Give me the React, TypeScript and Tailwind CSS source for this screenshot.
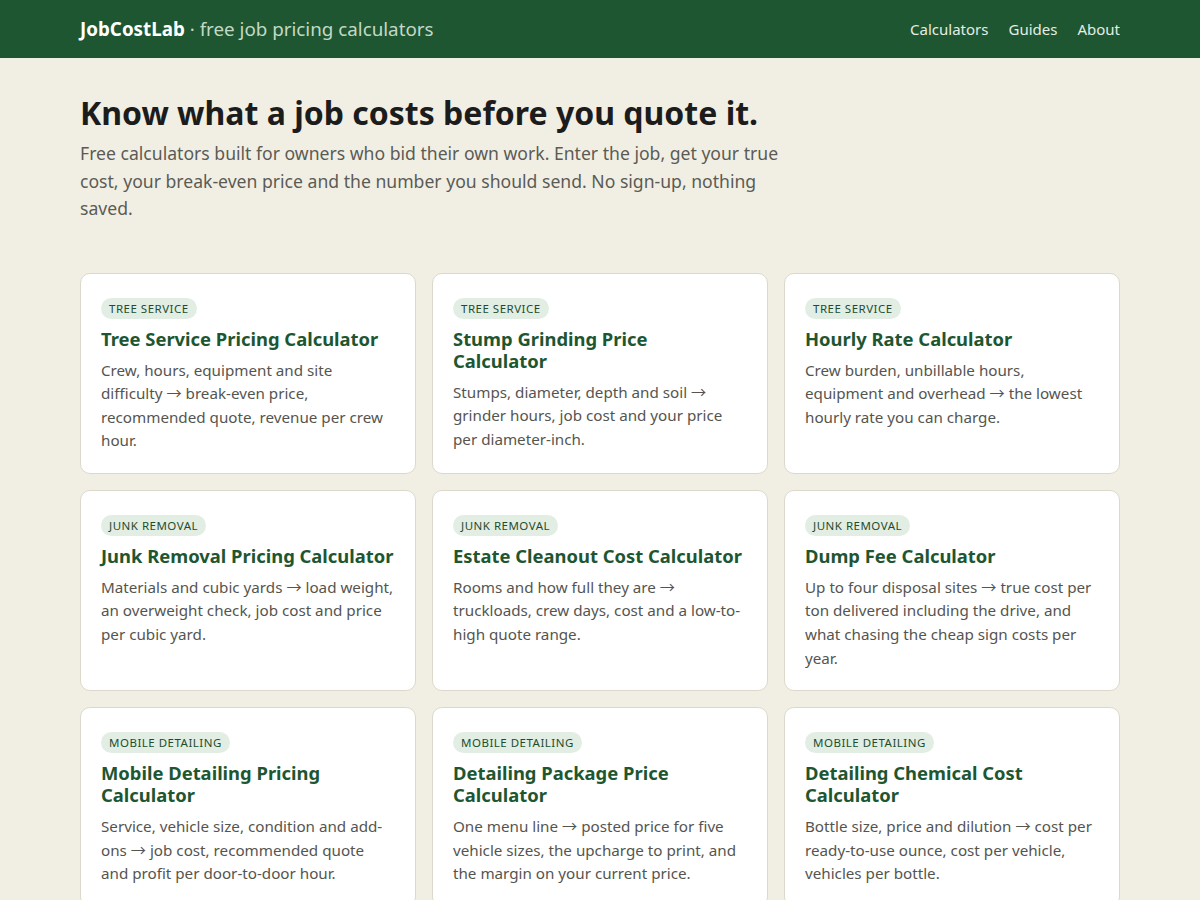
import React from "react";

const cards = [
  { tag: "Tree service", title: "Tree Service Pricing Calculator", a: "Crew, hours, equipment and site difficulty", b: "break-even price, recommended quote, revenue per crew hour." },
  { tag: "Tree service", title: "Stump Grinding Price", title2: "Calculator", a: "Stumps, diameter, depth and soil", b: "grinder hours, job cost and your price per diameter-inch." },
  { tag: "Tree service", title: "Hourly Rate Calculator", a: "Crew burden, unbillable hours, equipment and overhead", b: "the lowest hourly rate you can charge." },
  { tag: "Junk removal", title: "Junk Removal Pricing Calculator", a: "Materials and cubic yards", b: "load weight, an overweight check, job cost and price per cubic yard." },
  { tag: "Junk removal", title: "Estate Cleanout Cost Calculator", a: "Rooms and how full they are", b: "truckloads, crew days, cost and a low-to-high quote range." },
  { tag: "Junk removal", title: "Dump Fee Calculator", a: "Up to four disposal sites", b: "true cost per ton delivered including the drive, and what chasing the cheap sign costs per year." },
  { tag: "Mobile detailing", title: "Mobile Detailing Pricing Calculator", a: "Service, vehicle size, condition and add-ons", b: "job cost, recommended quote and profit per door-to-door hour." },
  { tag: "Mobile detailing", title: "Detailing Package Price Calculator", a: "One menu line", b: "posted price for five vehicle sizes, the upcharge to print, and the margin on your current price." },
  { tag: "Mobile detailing", title: "Detailing Chemical Cost Calculator", a: "Bottle size, price and dilution", b: "cost per ready-to-use ounce, cost per vehicle, vehicles per bottle." },
];

export default function App() {
  return (
    <div className="min-h-screen bg-[#f1efe4] font-['Noto_Sans',sans-serif]">
      <header className="bg-[#1e5631] h-[58px]">
        <div className="mx-auto w-[1040px] h-full flex items-center justify-between">
          <div className="text-[18.8px]">
            <span className="font-bold text-white">JobCostLab</span>
            <span className="text-[#c3d9c6]"> · free job pricing calculators</span>
          </div>
          <nav className="flex gap-5 text-[15px] text-[#e3eee4]">
            <a>Calculators</a>
            <a>Guides</a>
            <a>About</a>
          </nav>
        </div>
      </header>
      <main className="mx-auto w-[1040px] pt-[35px]">
        <h1 className="text-[32px] font-bold text-[#1c1c1c] leading-[40px]">Know what a job costs before you quote it.</h1>
        <p className="mt-[7px] text-[17.6px] leading-[27.5px] text-[#5b5b55] max-w-[720px]">
          Free calculators built for owners who bid their own work. Enter the job, get your true cost, your break-even price and the number you should send. No sign-up, nothing saved.
        </p>
        <div className="mt-[50px] grid grid-cols-3 gap-4">
          {cards.map((c, i) => (
            <div key={i} className="flex flex-col items-start bg-white border border-[#dcd9cc] rounded-[10px] pt-6 px-5 pb-[20px]">
              <span className="rounded-full bg-[#e2ede4] text-[#1e4d2e] text-[11.5px] uppercase tracking-[0.5px] leading-[21px] px-2">{c.tag}</span>
              <h2 className="mt-[9px] text-[18.4px] font-bold leading-[22px] text-[#1e5631]">
                {c.title}
                {c.title2 ? (<><br />{c.title2}</>) : null}
              </h2>
              <p className="mt-[9px] text-[15.2px] leading-[23.6px] text-[#555550]">
                {c.a} <span className="font-['Noto_Sans_CJK_JP',sans-serif] leading-[20px]">→</span> {c.b}
              </p>
            </div>
          ))}
        </div>
      </main>
    </div>
  );
}
